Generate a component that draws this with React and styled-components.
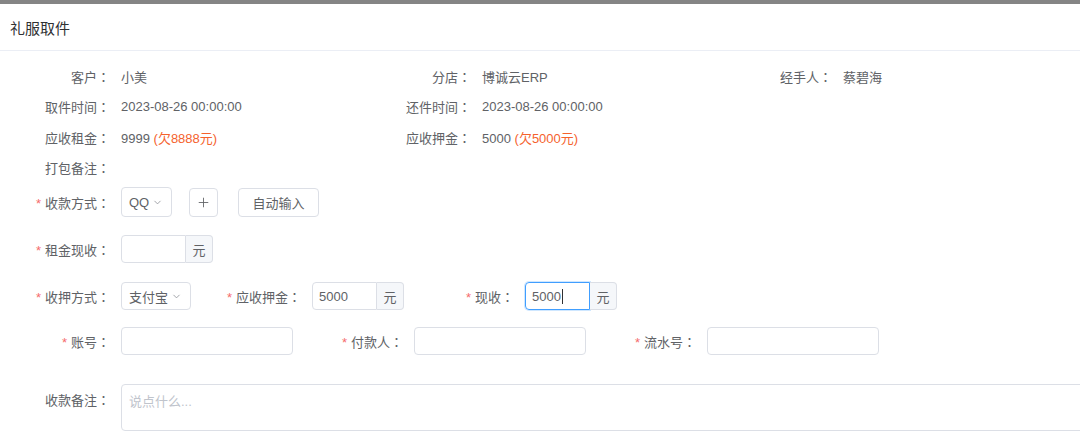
import React from 'react';
import styled, { createGlobalStyle } from 'styled-components';
import { ChevronDown, Plus } from 'lucide-react';

const GlobalStyle = createGlobalStyle`
    html, body {
        margin: 0;
        padding: 0;
        background: #fff;
        overflow: hidden;
    }
    body {
        font-family: "Liberation Sans", "Noto Sans CJK SC", sans-serif;
        font-size: 13px;
        color: #606266;
    }
`

const info = [
    { label: '客户', value: '小美' },
    { label: '分店', value: '博诚云ERP' },
    { label: '经手人', value: '蔡碧海' },
    { label: '取件时间', value: '2023-08-26 00:00:00' },
    { label: '还件时间', value: '2023-08-26 00:00:00' },
    { label: '', value: '' },
    { label: '应收租金', value: '9999', owe: '(欠8888元)' },
    { label: '应收押金', value: '5000', owe: '(欠5000元)' },
    { label: '', value: '' },
    { label: '打包备注', value: '' },
];

function LabelText({ text, required }) {
    return (
        <Label>
            {required && <Star>*</Star>}
            {text}
            <Colon>：</Colon>
        </Label>
    );
}

function AddonInput({ value, focused }) {
    return (
        <AddonWrap>
            <FakeInput $focused={focused}>
                {value}
                {focused && <Caret />}
            </FakeInput>
            <Addon>元</Addon>
        </AddonWrap>
    );
}

function Select({ value, width, height }) {
    return (
        <SelectBox $w={width} $h={height}>
            {value}
            <ChevronDown size={11} strokeWidth={1.8} color="#909399" />
        </SelectBox>
    );
}

export default function App() {
    return (
        <Page>
            <GlobalStyle />
            <TopBar />
            <Header>礼服取件</Header>
            <Body>
                <InfoGrid>
                    {info.map((item, i) => (
                        <InfoCell key={i}>
                            {item.label && (
                                <>
                                    <LabelText text={item.label} />
                                    <span>
                                        {item.value}
                                        {item.owe && <Owe> {item.owe}</Owe>}
                                    </span>
                                </>
                            )}
                        </InfoCell>
                    ))}
                </InfoGrid>

                <FormRow>
                    <LabelText text="收款方式" required />
                    <Select value="QQ" width={51} height={30} />
                    <IconButton>
                        <Plus size={15} strokeWidth={1.4} color="#606266" />
                    </IconButton>
                    <TextButton>自动输入</TextButton>
                </FormRow>

                <FormRow>
                    <LabelText text="租金现收" required />
                    <AddonInput value="" />
                </FormRow>

                <FormRow>
                    <LabelText text="收押方式" required />
                    <Select value="支付宝" width={70} height={28} />
                    <LabelText text="应收押金" required />
                    <AddonInput value="5000" />
                    <LabelText text="现收" required />
                    <AddonInput value="5000" focused />
                </FormRow>

                <FormRow $mt={-2}>
                    <LabelText text="账号" required />
                    <TextInput />
                    <LabelText text="付款人" required />
                    <TextInput />
                    <LabelText text="流水号" required />
                    <TextInput />
                </FormRow>

                <NoteRow>
                    <LabelText text="收款备注" />
                    <TextArea>说点什么...</TextArea>
                </NoteRow>
            </Body>
        </Page>
    );
}

const Page = styled.div`
    width: 1080px;
    height: 439px;
    overflow: hidden;
`

const TopBar = styled.div`
    height: 4px;
    background: #858585;
`

const Header = styled.div`
    height: 46px;
    border-bottom: 1px solid #ebeef5;
    padding-left: 10px;
    display: flex;
    align-items: center;
    font-size: 15px;
    color: #303133;
`

const Body = styled.div`
    padding-top: 10px;
`

const InfoGrid = styled.div`
    display: grid;
    grid-template-columns: repeat(3, 361px);
    grid-auto-rows: 30.5px;
    margin-bottom: 4px;
`

const InfoCell = styled.div`
    display: flex;
    align-items: center;
`

const Label = styled.div`
    width: 121px;
    flex-shrink: 0;
    box-sizing: border-box;
    padding-right: 11px;
    text-align: right;
    color: #606266;
    white-space: nowrap;
`

const Colon = styled.span`
    font-family: "Noto Sans CJK JP", sans-serif;
`

const Star = styled.span`
    color: #f56c6c;
    margin-right: 4px;
`

const Owe = styled.span`
    color: #f5622d;
`

const FormRow = styled.div`
    display: flex;
    align-items: center;
    height: 30px;
    margin-top: ${p => p.$mt || 0}px;
    margin-bottom: 17px;
`

const SelectBox = styled.div`
    width: ${p => p.$w}px;
    height: ${p => p.$h}px;
    box-sizing: border-box;
    border: 1px solid #dcdfe6;
    border-radius: 4px;
    padding-left: 7px;
    display: flex;
    align-items: center;
    gap: 3px;
    color: #606266;
`

const IconButton = styled.div`
    width: 29px;
    height: 29px;
    box-sizing: border-box;
    margin-left: 17px;
    border: 1px solid #dcdfe6;
    border-radius: 4px;
    display: flex;
    align-items: center;
    justify-content: center;
`

const TextButton = styled.div`
    width: 81px;
    height: 29px;
    box-sizing: border-box;
    margin-left: 20px;
    border: 1px solid #dcdfe6;
    border-radius: 4px;
    display: flex;
    align-items: center;
    justify-content: center;
    color: #606266;
`

const AddonWrap = styled.div`
    display: flex;
    height: 28px;
`

const FakeInput = styled.div`
    width: 65px;
    box-sizing: border-box;
    border: 1px solid ${p => (p.$focused ? '#409eff' : '#dcdfe6')};
    box-shadow: ${p => (p.$focused ? '0 0 0 1px rgba(64, 158, 255, 0.25)' : 'none')};
    border-radius: 4px 0 0 4px;
    padding-left: 6px;
    display: flex;
    align-items: center;
    color: #606266;
`

const Caret = styled.span`
    display: inline-block;
    width: 1px;
    height: 15px;
    background: #303133;
    margin-left: 1px;
`

const Addon = styled.div`
    width: 27px;
    box-sizing: border-box;
    border: 1px solid #dcdfe6;
    border-left: none;
    border-radius: 0 4px 4px 0;
    background: #f5f7fa;
    display: flex;
    align-items: center;
    justify-content: center;
    color: #606266;
`

const TextInput = styled.div`
    width: 172px;
    height: 28px;
    box-sizing: border-box;
    border: 1px solid #dcdfe6;
    border-radius: 4px;
`

const NoteRow = styled.div`
    display: flex;
    align-items: flex-start;
    margin-top: 28px;
    ${Label} {
        line-height: 30px;
        padding-top: 1px;
    }
`

const TextArea = styled.div`
    width: 1000px;
    height: 47px;
    flex-shrink: 0;
    box-sizing: border-box;
    border: 1px solid #dcdfe6;
    border-radius: 4px;
    padding: 6px 7px;
    color: #c0c4cc;
    font-size: 13px;
`
